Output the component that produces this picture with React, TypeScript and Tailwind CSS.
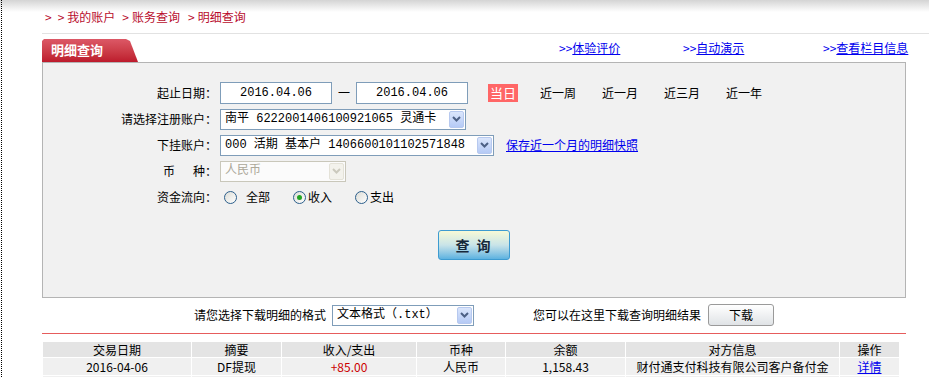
import React from "react";

function Arrow({ disabled }: { disabled?: boolean }) {
  return (
    <div
      className={
        disabled
          ? "w-[15px] h-[17px] rounded-[2px] border border-[#e4e2d8] bg-[#f3f2ec] flex items-center justify-center"
          : "w-[15px] h-[17px] rounded-[2px] border border-[#b7c9ef] bg-gradient-to-b from-[#dbe6fc] to-[#b5caf5] flex items-center justify-center"
      }
    >
      <svg width="9" height="6" viewBox="0 0 9 6">
        <path
          d="M1 1 L4.5 4.5 L8 1"
          stroke={disabled ? "#cbc9bd" : "#4d6185"}
          strokeWidth="2"
          fill="none"
        />
      </svg>
    </div>
  );
}

function Select({
  text,
  width,
  disabled,
}: {
  text: string;
  width: string;
  disabled?: boolean;
}) {
  return (
    <div
      className={
        (disabled
          ? "border-[#c9c7ba] bg-[#fbfbfb] text-[#aca899] "
          : "border-[#7f9db9] bg-white text-black ") +
        width +
        " h-[21px] shrink-0 border flex items-center justify-between pl-[4px] pr-[1px] font-['Liberation_Mono','Noto_Sans_CJK_SC',monospace] text-[12px] whitespace-pre"
      }
    >
      <span className="leading-[19px]">{text}</span>
      <Arrow disabled={disabled} />
    </div>
  );
}

function Radio({ checked }: { checked?: boolean }) {
  return (
    <span className="w-[13px] h-[13px] rounded-full border border-[#2c5f8c] bg-gradient-to-br from-[#dcdcd6] to-white flex items-center justify-center">
      {checked && <span className="w-[5px] h-[5px] rounded-full bg-[#22a422]" />}
    </span>
  );
}

function Row({ label, children }: { label: React.ReactNode; children: React.ReactNode }) {
  return (
    <div className="h-[26px] shrink-0 flex items-center">
      <div className="w-[177px] shrink-0 text-right pr-[3px] leading-[16px]">{label}</div>
      {children}
    </div>
  );
}

const cols = [
  { w: "w-[148px]", h: "交易日期" },
  { w: "w-[89px]", h: "摘要" },
  { w: "w-[134px]", h: "收入/支出" },
  { w: "w-[88px]", h: "币种" },
  { w: "w-[119px]", h: "余额" },
  { w: "w-[213px]", h: "对方信息" },
  { w: "w-[59px]", h: "操作" },
];

export default function App() {
  return (
    <div className="w-[929px] h-[377px] overflow-hidden bg-[linear-gradient(to_bottom,#d4d4d4,#ffffff_12px)] flex text-[12px] text-black font-['Noto_Sans_CJK_SC',sans-serif]">
      <div className="ml-[1px] w-0 h-full shrink-0 border-l border-dotted border-black" />
      <div className="ml-[40px] flex-1 flex flex-col">
        {/* breadcrumb */}
        <div className="h-[34px] shrink-0 border-b border-[#e2e2e2] flex items-center pl-[3px] pt-[1px] text-[#b80c2c] leading-[16px]">
          <span>&gt;</span>
          <span className="ml-[6px]">&gt;</span>
          <span className="ml-[3px]">我的账户</span>
          <span className="ml-[7px]">&gt;</span>
          <span className="ml-[3px]">账务查询</span>
          <span className="ml-[8px]">&gt;</span>
          <span className="ml-[3px]">明细查询</span>
        </div>

        {/* tab row */}
        <div className="mt-[5px] h-[23px] shrink-0 flex">
          <div className="w-[96px] h-[23px] shrink-0 bg-gradient-to-b from-[#dc5866] to-[#bd1a2c] [clip-path:polygon(0_2px,2px_0,84px_0,88px_2px,96px_23px,0_23px)] text-white font-bold text-[13px] pl-[9px] pt-[1px] leading-[20px]">
            明细查询
          </div>
          <div className="ml-[421px] flex pt-[1px] leading-[16px] text-[#0000ee]">
            <span className="w-[124px]">
              &gt;&gt;<span className="underline">体验评价</span>
            </span>
            <span className="w-[140px]">
              &gt;&gt;<span className="underline">自动演示</span>
            </span>
            <span>
              &gt;&gt;<span className="underline">查看栏目信息</span>
            </span>
          </div>
        </div>

        {/* panel */}
        <div className="w-[864px] h-[236px] shrink-0 border border-[#b4b4b4] bg-[#f1f1f1] pt-[17px] flex flex-col">
          <Row label="起止日期：">
            <div className="w-[112px] h-[22px] shrink-0 border border-[#7f9db9] bg-white flex items-center justify-center font-['Liberation_Mono',monospace] text-[12px]">
              2016.04.06
            </div>
            <div className="w-[24px] text-center">一</div>
            <div className="w-[112px] h-[22px] shrink-0 border border-[#7f9db9] bg-white flex items-center justify-center font-['Liberation_Mono',monospace] text-[12px]">
              2016.04.06
            </div>
            <div className="ml-[20px] w-[30px] h-[18px] bg-[#ff6666] text-white text-[13px] flex items-center justify-center">
              当日
            </div>
            <div className="ml-[22px] flex gap-[26px]">
              <span className="w-[36px]">近一周</span>
              <span className="w-[36px]">近一月</span>
              <span className="w-[36px]">近三月</span>
              <span className="w-[36px]">近一年</span>
            </div>
          </Row>
          <Row label="请选择注册账户：">
            <Select width="w-[246px]" text="南平 6222001406100921065 灵通卡" />
          </Row>
          <Row label="下挂账户：">
            <Select width="w-[274px]" text="000 活期 基本户 1406600101102571848" />
            <span className="ml-[12px] text-[#0000ee] underline">保存近一个月的明细快照</span>
          </Row>
          <Row
            label={
              <span>
                币<span className="ml-[18px]">种</span>：
              </span>
            }
          >
            <Select width="w-[126px]" text="人民币" disabled />
          </Row>
          <Row label="资金流向：">
            <span className="ml-[4px]">
              <Radio />
            </span>
            <span className="ml-[9px]">全部</span>
            <span className="ml-[23px]">
              <Radio checked />
            </span>
            <span className="ml-[2px]">收入</span>
            <span className="ml-[23px]">
              <Radio />
            </span>
            <span className="ml-[2px]">支出</span>
          </Row>
          <div className="mt-[20px] shrink-0 flex justify-center">
            <div className="w-[72px] h-[30px] rounded-[3px] border border-[#3d9bd1] bg-gradient-to-b from-[#f7fad6] via-[#c9e4e8] to-[#5cb2e0] flex items-center justify-center text-[14px] font-bold text-[#17283a] tracking-[2px]">
              查 询
            </div>
          </div>
        </div>

        {/* download row */}
        <div className="w-[864px] h-[36px] shrink-0 border-b border-[#e65c5c] flex items-center pl-[152px] pb-[1px]">
          <span>请您选择下载明细的格式</span>
          <div className="ml-[6px]">
            <Select width="w-[142px]" text="文本格式（.txt）" />
          </div>
          <span className="ml-[59px]">您可以在这里下载查询明细结果</span>
          <div className="ml-[7px] w-[66px] h-[22px] rounded-[3px] border border-[#9a9a9a] bg-gradient-to-b from-white to-[#e0e3e6] flex items-center justify-center">
            下载
          </div>
        </div>

        {/* table */}
        <table className="mt-[7px] shrink-0 w-[858px] table-fixed border-separate border-spacing-[1px] text-[12px]">
          <thead>
            <tr>
              {cols.map((c) => (
                <th key={c.h} className={c.w + " p-0 h-[15px] leading-[15px] font-normal bg-[#e4e4e4] text-center"}>
                  {c.h}
                </th>
              ))}
            </tr>
          </thead>
          <tbody>
            <tr>
              <td className="p-0 h-[17px] leading-[17px] bg-[#f0f0f0] text-center">2016-04-06</td>
              <td className="p-0 h-[17px] leading-[17px] bg-[#f0f0f0] text-center">DF提现</td>
              <td className="p-0 h-[17px] leading-[17px] bg-[#f0f0f0] text-center text-[#cc0000]">+85.00</td>
              <td className="p-0 h-[17px] leading-[17px] bg-[#f0f0f0] text-center">人民币</td>
              <td className="p-0 h-[17px] leading-[17px] bg-[#f0f0f0] text-center">1,158.43</td>
              <td className="p-0 h-[17px] leading-[17px] bg-[#f0f0f0] text-center">财付通支付科技有限公司客户备付金</td>
              <td className="p-0 h-[17px] leading-[17px] bg-[#f0f0f0] text-center text-[#0000ee] underline">详情</td>
            </tr>
            <tr>
              <td className="p-0 h-[17px] bg-[#f0f0f0]" />
              <td className="p-0 h-[17px] bg-[#f0f0f0]" />
              <td className="p-0 h-[17px] bg-[#f0f0f0]" />
              <td className="p-0 h-[17px] bg-[#f0f0f0]" />
              <td className="p-0 h-[17px] bg-[#f0f0f0]" />
              <td className="p-0 h-[17px] bg-[#f0f0f0]" />
              <td className="p-0 h-[17px] bg-[#f0f0f0]" />
            </tr>
          </tbody>
        </table>
      </div>
    </div>
  );
}
